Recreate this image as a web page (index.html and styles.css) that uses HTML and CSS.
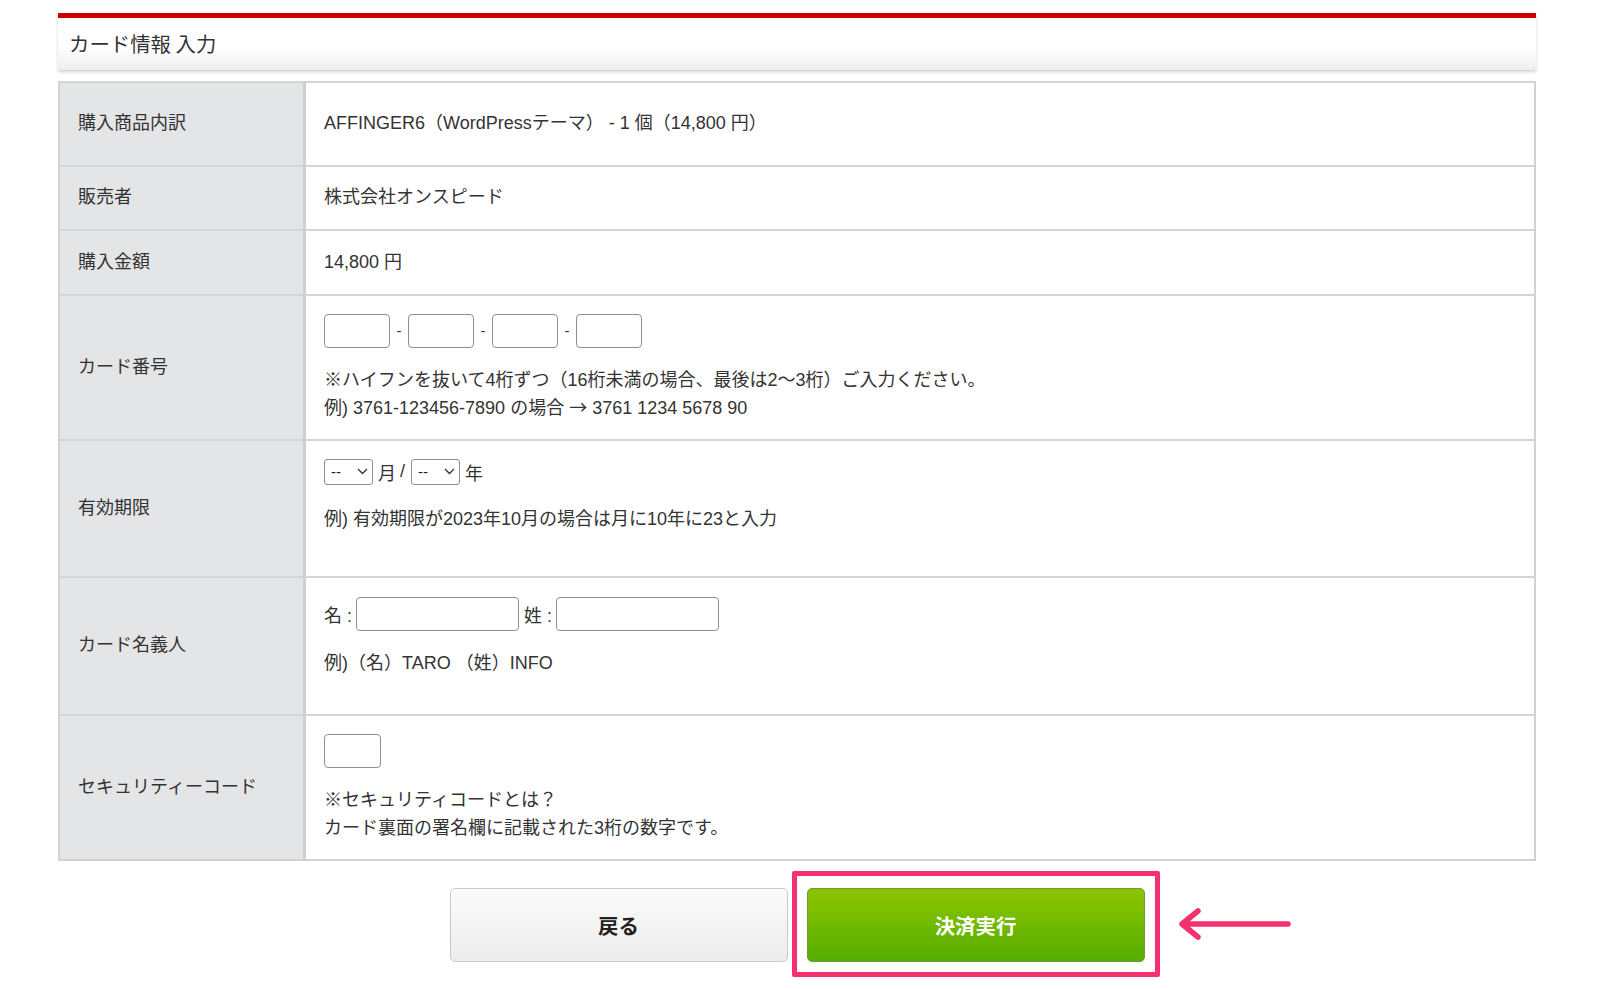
FILE: index.html
```html
<!DOCTYPE html>
<html lang="ja">
  <head>
    <meta charset="utf-8">
    <title>カード情報 入力</title>
    <link rel="stylesheet" href="styles.css">
  </head>
  <body>
    <div class="wrap">
      <div class="heading">
        <h2>カード情報 入力</h2>
      </div>

      <table class="card-form">
        <tr class="r-item">
          <th>購入商品内訳</th>
          <td class="one">AFFINGER6（WordPressテーマ） - 1 個（14,800 円）</td>
        </tr>
        <tr class="r-short">
          <th>販売者</th>
          <td class="one">株式会社オンスピード</td>
        </tr>
        <tr class="r-short">
          <th>購入金額</th>
          <td class="one">14,800 円</td>
        </tr>
        <tr class="r-card">
          <th>カード番号</th>
          <td>
            <div class="fields">
              <input type="text" class="num"><span class="dash">-</span><input type="text" class="num"><span class="dash">-</span><input type="text" class="num"><span class="dash">-</span><input type="text" class="num">
            </div>
            <p class="help">
              ※ハイフンを抜いて4桁ずつ（16桁未満の場合、最後は2〜3桁）ご入力ください。<br>
              例) 3761-123456-7890 の場合 <span class="arr">→</span> 3761 1234 5678 90
            </p>
          </td>
        </tr>
        <tr class="r-tall">
          <th>有効期限</th>
          <td>
            <div class="fields exp">
              <span class="select"><select><option>--</option></select><svg width="11" height="7" viewBox="0 0 11 7"><path d="M1 1l4.5 4.5L10 1" fill="none" stroke="#333" stroke-width="1.3"/></svg></span>
              <span class="unit">月</span><span class="slash">/</span>
              <span class="select"><select><option>--</option></select><svg width="11" height="7" viewBox="0 0 11 7"><path d="M1 1l4.5 4.5L10 1" fill="none" stroke="#333" stroke-width="1.3"/></svg></span>
              <span class="unit">年</span>
            </div>
            <p class="help">例) 有効期限が2023年10月の場合は月に10年に23と入力</p>
          </td>
        </tr>
        <tr class="r-tall">
          <th>カード名義人</th>
          <td class="name-cell">
            <div class="fields">
              <span class="lbl">名 :</span><input type="text" class="name">
              <span class="lbl">姓 :</span><input type="text" class="name">
            </div>
            <p class="help">例)（名）TARO （姓）INFO</p>
          </td>
        </tr>
        <tr class="r-card">
          <th>セキュリティーコード</th>
          <td>
            <div class="fields">
              <input type="text" class="cvc">
            </div>
            <p class="help">
              ※セキュリティコードとは？<br>
              カード裏面の署名欄に記載された3桁の数字です。
            </p>
          </td>
        </tr>
      </table>

      <div class="buttons">
        <button class="btn back">戻る</button>
        <div class="submit-box">
          <button class="btn submit">決済実行</button>
          <svg class="arrow" width="116" height="40" viewBox="0 0 116 40">
            <path d="M112 20H6M22 7L6 20l16 13" fill="none" stroke="#f5306e" stroke-width="5.5" stroke-linecap="round" stroke-linejoin="round"/>
          </svg>
        </div>
      </div>
    </div>
  </body>
</html>
```

FILE: styles.css
```css
body {
  margin: 0;
  background: #fff;
  font-family: "Liberation Sans", "Noto Sans CJK JP", sans-serif;
  color: #333;
}
.wrap {
  width: 1478px;
  margin: 13px 0 0 58px;
  padding-bottom: 30px;
}
.heading {
  border-top: 5px solid #cc0000;
  background: linear-gradient(#fff 55%, #eeeeee);
  box-shadow: 0 2px 3px rgba(0, 0, 0, 0.18);
  height: 50px;
  display: flex;
  align-items: center;
  padding: 0 0 2px 11px;
  box-sizing: content-box;
}
.heading h2 {
  margin: 0;
  font-size: 20.4px;
  font-weight: normal;
  color: #333;
  font-family: "Noto Sans CJK JP", sans-serif;
}
.card-form {
  width: 100%;
  margin-top: 11px;
  border-collapse: collapse;
  border: 2px solid #d2d2d2;
  font-size: 18px;
}
.card-form th,
.card-form td {
  border-top: 2px solid #d5d5d5;
  text-align: left;
  font-weight: normal;
  vertical-align: top;
}
.card-form th {
  width: 225px;
  background: #e4e5e7;
  border-right: 3px solid #cfcfcf;
  padding: 0 0 5px 18px;
  vertical-align: middle;
}
.card-form td {
  padding: 18px 0 0 18px;
}
.card-form td.one {
  padding: 0 0 5px 18px;
  vertical-align: middle;
}
.card-form td.name-cell {
  padding-top: 19px;
}
.r-item th { height: 76.5px; }
.r-short th { height: 57.5px; }
.r-card th { height: 138px; }
.r-tall th { height: 130.5px; }

.fields {
  display: flex;
  align-items: center;
}
.help {
  margin: 19.5px 0 0;
  line-height: 27.5px;
}
.arr {
  font-family: "Noto Sans CJK JP", sans-serif;
  line-height: 1;
}
input {
  border: 1px solid #8f8f8f;
  border-radius: 4px;
  height: 34px;
  box-sizing: border-box;
  margin: 0;
  padding: 0 4px;
  background: #fff;
}
.num { width: 66px; }
.cvc { width: 57px; }
.name { width: 163px; }
.name-cell .help {
  margin-top: 19px;
}
.dash {
  width: 18px;
  text-align: center;
  font-size: 15px;
}
.lbl {
  margin-right: 4px;
}
.name + .lbl {
  margin-left: 5px;
}
.select {
  display: inline-flex;
  align-items: center;
  width: 49px;
  height: 26px;
  box-sizing: border-box;
  border: 1px solid #8f8f8f;
  border-radius: 3px;
  padding: 0 4px 0 6px;
}
.select select {
  appearance: none;
  border: none;
  background: none;
  padding: 0;
  font-size: 15px;
  flex: 1;
  color: #222;
  font-family: "Liberation Sans", sans-serif;
}
.unit {
  margin: 0 4px 0 5px;
}
.slash {
  margin-right: 6px;
}
.exp + .help {
  margin-top: 21px;
}

.buttons {
  display: flex;
  justify-content: center;
  gap: 19px;
  margin-top: 27.5px;
}
.btn {
  width: 338px;
  height: 73.5px;
  border-radius: 5px;
  font-size: 20.4px;
  font-weight: bold;
  font-family: "Noto Sans CJK JP", sans-serif;
  cursor: pointer;
}
.back {
  border: 1px solid #c8c8c8;
  background: linear-gradient(#fbfbfb, #ececec);
  color: #222;
}
.submit-box {
  position: relative;
}
.submit-box::after {
  content: "";
  position: absolute;
  top: -17px;
  bottom: -15px;
  left: -15px;
  right: -15px;
  border: 5px solid #f5306e;
  border-radius: 2px;
  pointer-events: none;
}
.submit {
  border: 1px solid #6f9a3c;
  background: linear-gradient(#8cc500, #56ad00);
  color: #fff;
}
.arrow {
  position: absolute;
  left: 369px;
  top: 16px;
}
```
